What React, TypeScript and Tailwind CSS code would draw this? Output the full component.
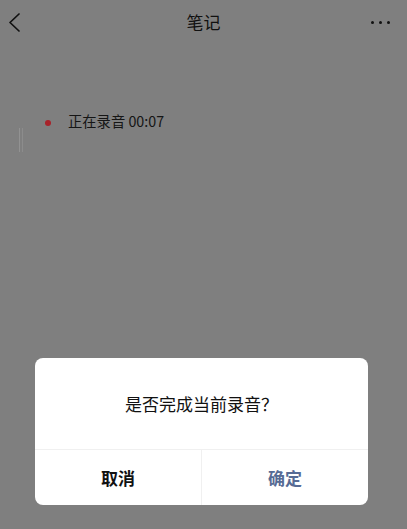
// Note page with "finish recording?" confirm dialog on top of a dimmed page.

const FONT = { fontFamily: '"Noto Sans CJK SC", "Noto Sans", sans-serif' };

function BackIcon() {
  return (
    <svg width="24" height="44" viewBox="0 0 24 44" fill="none" className="shrink-0">
      <polyline points="19,14 10,22.5 19,31" stroke="#111" strokeWidth="1.7" strokeLinecap="round" strokeLinejoin="round" />
    </svg>
  );
}

function Header() {
  return (
    <div className="flex h-[44px] items-center justify-between">
      <div className="w-[42px]">
        <BackIcon />
      </div>
      <div className="text-[17px] text-[#111]">笔记</div>
      <div className="flex w-[42px] items-center gap-[5px] pl-[6px]">
        <span className="h-[3px] w-[3px] shrink-0 rounded-full bg-[#111]" />
        <span className="h-[3px] w-[3px] shrink-0 rounded-full bg-[#111]" />
        <span className="h-[3px] w-[3px] shrink-0 rounded-full bg-[#111]" />
      </div>
    </div>
  );
}

function RecordingRow() {
  return (
    <div className="mt-[66px] flex">
      <div className="ml-[19px] mt-[18px] flex h-[24px] gap-[2px]">
        <span className="w-px bg-[#929292]" />
        <span className="w-px bg-[#8c8c8c]" />
      </div>
      <div className="ml-[22px] flex h-[22px] items-center">
        <span className="mt-[3px] h-[6px] w-[6px] rounded-full bg-[#a8232a]" />
        <span className="ml-[17px] text-[14.3px] text-[#151515]">正在录音 00:07</span>
      </div>
    </div>
  );
}

function ConfirmDialog() {
  return (
    <div className="absolute left-[35px] top-[358px] w-[333px] overflow-hidden rounded-[8px] bg-white">
      <div className="flex h-[91px] items-center justify-center text-[17px] text-[#111]">
        是否完成当前录音？
      </div>
      <div className="flex h-[56px] border-t border-[#f0f0f0]">
        <button className="flex flex-1 items-center justify-center text-[17px] font-bold text-[#111]">取消</button>
        <div className="w-px bg-[#f0f0f0]" />
        <button className="flex flex-1 items-center justify-center text-[17px] font-bold text-[#576b95]">确定</button>
      </div>
    </div>
  );
}

export default function App() {
  return (
    <div className="relative h-[529px] w-[407px] overflow-hidden bg-[#7f7f7f]" style={FONT}>
      <Header />
      <RecordingRow />
      <ConfirmDialog />
    </div>
  );
}
